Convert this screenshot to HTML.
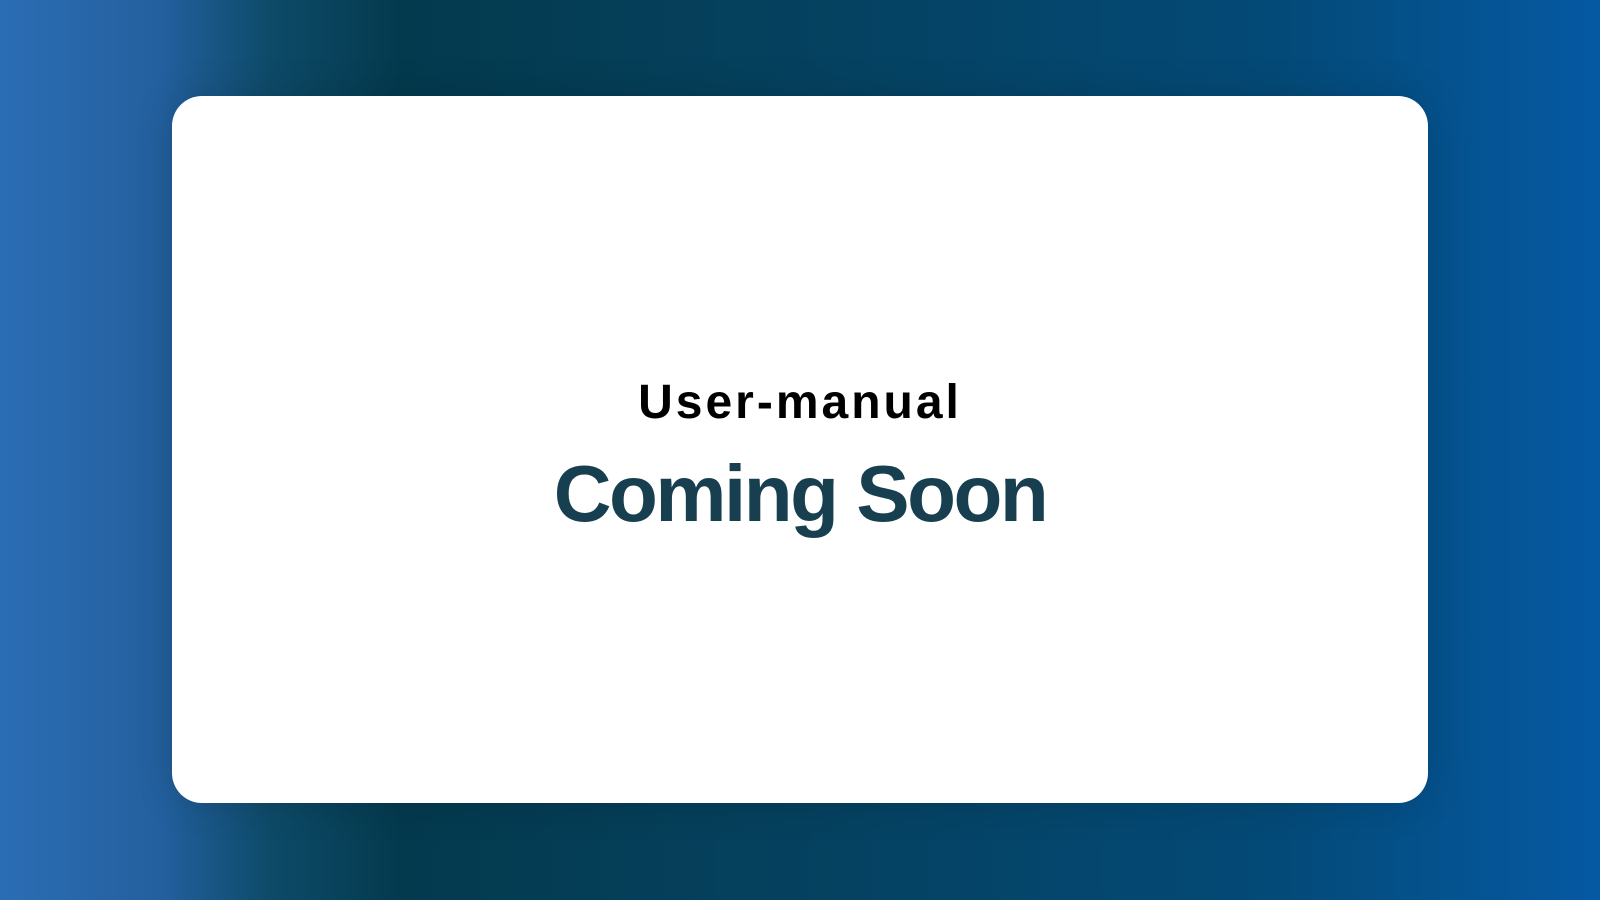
<!DOCTYPE html>
<html><head><meta charset="utf-8"><style>
html,body{margin:0;padding:0;width:1600px;height:900px;overflow:hidden}
body{background:linear-gradient(90deg,#2b6db4 0%,#23609f 10%,#0d4a68 17%,#043a4e 25%,#05415f 50%,#044a78 80%,#0559a3 100%);font-family:"Liberation Sans",sans-serif;position:relative}
.card{position:absolute;left:172px;top:96px;width:1256px;height:707px;background:#fff;border-radius:30px;box-shadow:0 0 40px rgba(0,0,0,.15)}
.t1{position:absolute;left:0;right:0;top:375px;text-align:center;font-weight:bold;font-size:48px;color:#000;letter-spacing:3px}
.t2{position:absolute;left:0;right:0;top:448px;text-align:center;font-weight:bold;font-size:80px;color:#173f4f;letter-spacing:-2.5px}
</style></head><body>
<div class="card"></div>
<div class="t1">User-manual</div>
<div class="t2">Coming Soon</div>
</body></html>
